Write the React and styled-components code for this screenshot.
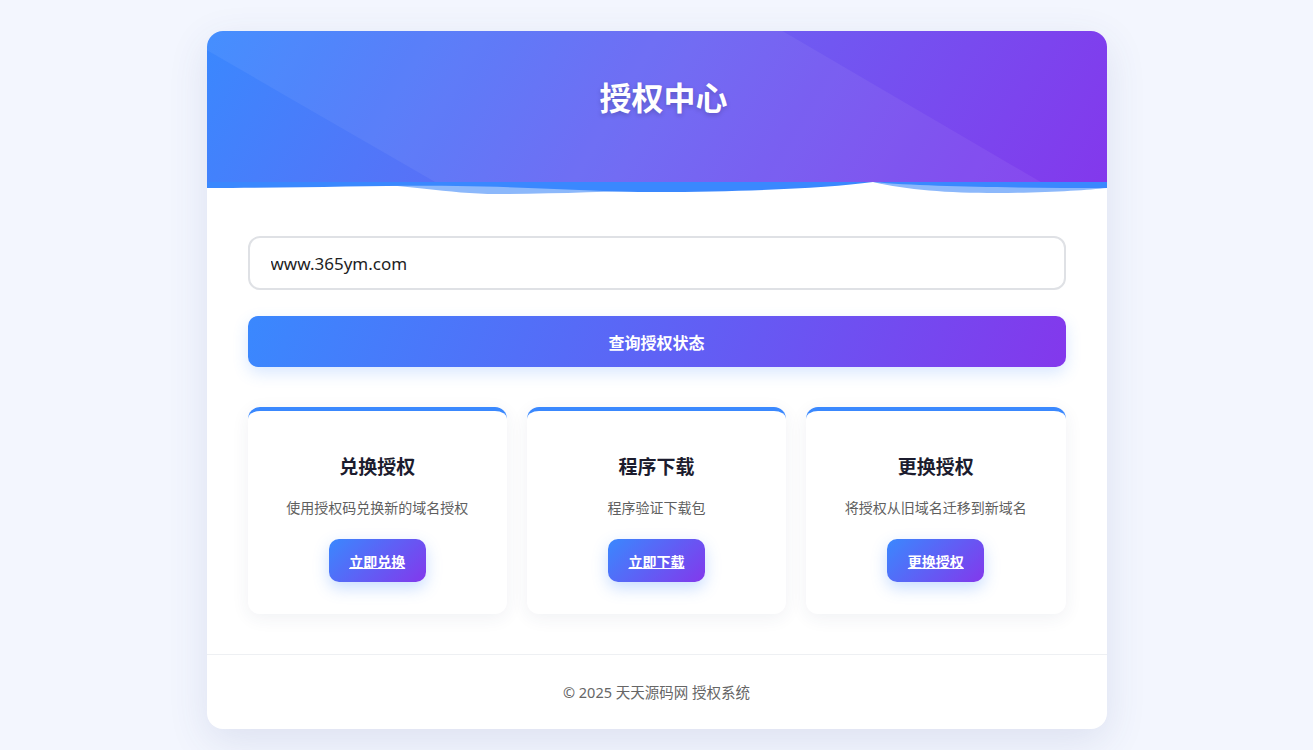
import React from "react";
import styled, { createGlobalStyle } from "styled-components";

const GlobalStyle = createGlobalStyle`
  * { box-sizing: border-box; }
  body {
    margin: 0;
    background: #f3f6fe;
    font-family: "Noto Sans", "Noto Sans CJK SC", sans-serif;
  }
`;

const Page = styled.div`
  display: flex;
  justify-content: center;
  padding: 31px 0 22px;
`;

const Panel = styled.div`
  width: 900px;
  background: #fff;
  border-radius: 16px;
  overflow: hidden;
  box-shadow: 0 12px 40px rgba(60, 70, 140, 0.12);
`;

const Header = styled.header`
  position: relative;
  height: 151px;
  padding: 44px 0 0 14px;
  text-align: center;
  background: linear-gradient(120deg, #3a88fe 0%, #6a63f3 50%, #8338ec 100%);
  &::before {
    content: "";
    position: absolute;
    inset: 0;
    background: rgba(255, 255, 255, 0.06);
    clip-path: polygon(0 0, 64% 0, 92.7% 100%, 25.4% 100%, 0 12.6%);
  }
`;

const Title = styled.h1`
  position: relative;
  margin: 0;
  font-family: "Noto Sans CJK SC", sans-serif;
  font-size: 32px;
  line-height: 42px;
  font-weight: 700;
  color: #fff;
  text-shadow: 0 2px 5px rgba(0, 0, 0, 0.2);
`;

const Wave = styled.svg`
  display: block;
  width: 100%;
  height: 14px;
`;

const Body = styled.div`
  padding: 40px 41px 40px;
`;

const Input = styled.input`
  display: block;
  width: 100%;
  height: 54px;
  padding: 0 21px;
  border: 2px solid #dfe1e5;
  border-radius: 12px;
  font-family: "Noto Sans", "Noto Sans CJK SC", sans-serif;
  font-size: 17px;
  color: #1e1e1e;
  outline: none;
`;

const QueryButton = styled.button`
  display: block;
  width: 100%;
  height: 51px;
  margin-top: 26px;
  border: none;
  border-radius: 10px;
  background: linear-gradient(110deg, #3a88fe 0%, #5a67f6 45%, #8338ec 100%);
  color: #fff;
  font-family: "Noto Sans CJK SC", sans-serif;
  font-size: 16px;
  font-weight: 700;
  box-shadow: 0 6px 16px rgba(58, 134, 255, 0.2);
`;

const Cards = styled.div`
  display: grid;
  grid-template-columns: repeat(3, 1fr);
  gap: 20px;
  margin-top: 40px;
`;

const Card = styled.div`
  height: 207px;
  padding: 40px 16px 0;
  border-top: 4px solid #3a88fe;
  border-radius: 12px;
  background: #fff;
  text-align: center;
  box-shadow: 0 4px 18px rgba(40, 50, 100, 0.07);
`;

const CardTitle = styled.h3`
  margin: 0;
  font-family: "Noto Sans CJK SC", sans-serif;
  font-size: 19px;
  line-height: 30px;
  font-weight: 700;
  color: #1c1c2e;
`;

const CardText = styled.p`
  margin: 16px 0 0;
  font-family: "Noto Sans CJK SC", sans-serif;
  font-size: 14px;
  line-height: 20px;
  color: #5f5f5f;
`;

const CardButton = styled.a`
  display: inline-flex;
  align-items: center;
  justify-content: center;
  width: 97px;
  height: 43px;
  margin-top: 22px;
  border-radius: 10px;
  background: linear-gradient(135deg, #3a88fe 0%, #8338ec 100%);
  color: #fff;
  font-family: "Noto Sans CJK SC", sans-serif;
  font-size: 14px;
  font-weight: 700;
  text-decoration: underline;
  box-shadow: 0 6px 16px rgba(58, 134, 255, 0.28);
`;

const Footer = styled.footer`
  border-top: 1px solid #eef0f3;
  padding: 27px 0 27px;
  text-align: center;
  font-family: "Noto Sans", "Noto Sans CJK SC", sans-serif;
  font-size: 14.5px;
  line-height: 20px;
  color: #666;
`;

const cards = [
  { title: "兑换授权", text: "使用授权码兑换新的域名授权", action: "立即兑换" },
  { title: "程序下载", text: "程序验证下载包", action: "立即下载" },
  { title: "更换授权", text: "将授权从旧域名迁移到新域名", action: "更换授权" },
];

const App = () => {
  return (
    <>
      <GlobalStyle />
      <Page>
        <Panel>
          <Header>
            <Title>授权中心</Title>
          </Header>
          <Wave viewBox="0 0 900 14" preserveAspectRatio="none">
            <path
              d="M130,0 C200,2 240,12 290,12 C350,12 400,9 460,9 L460,0 Z"
              fill="#8cb8fb"
            />
            <path
              d="M666,0 C700,8 740,11 790,11 C840,11 880,8 900,6 V0 Z"
              fill="#8cb8fb"
            />
            <path
              d="M0,0 H900 V6 C820,6 720,5 666,0 C620,6 540,10 448,10 C390,10 330,5 250,4 C180,3 100,6 0,6 Z"
              fill="#3a88fe"
            />
          </Wave>
          <Body>
            <Input defaultValue="www.365ym.com" />
            <QueryButton>查询授权状态</QueryButton>
            <Cards>
              {cards.map((c) => (
                <Card key={c.title}>
                  <CardTitle>{c.title}</CardTitle>
                  <CardText>{c.text}</CardText>
                  <CardButton href="#">{c.action}</CardButton>
                </Card>
              ))}
            </Cards>
          </Body>
          <Footer>© 2025 天天源码网 授权系统</Footer>
        </Panel>
      </Page>
    </>
  );
};

export default App;
